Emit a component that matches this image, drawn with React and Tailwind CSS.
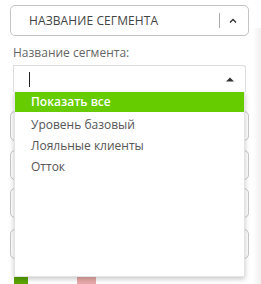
import React from "react";

const items = ["Уровень базовый", "Лояльные клиенты", "Отток"];

const App = () => {
  return (
    <div
      className="relative w-[261px] h-[284px] overflow-hidden bg-white"
      style={{ fontFamily: '"Open Sans", "Noto Sans", sans-serif' }}
    >
      {/* right panel edge */}
      <div className="absolute right-0 top-[28px] bottom-0 w-[8px] bg-gradient-to-r from-white to-[#f0f0f0]" />

      <div className="relative pl-[10px] pt-[5px] w-[249px]">
        <div className="flex items-center h-[31px] border border-[#c4c4c4] rounded-[5px] pl-[18px] pr-[8px]">
          <span className="flex-1 text-[12px] text-[#444] tracking-[0.1px]">НАЗВАНИЕ СЕГМЕНТА</span>
          <span className="w-px h-[15px] bg-[#aaa] mr-[8px]" />
          <svg width="10" height="10" viewBox="0 0 10 10" className="mr-[2px]">
            <path d="M2 6.5 L5 3.5 L8 6.5" fill="none" stroke="#333" strokeWidth="1.4" />
          </svg>
        </div>

        <div className="mt-[9px] pl-[3px] text-[12px] text-[#666] leading-[16px]">Название сегмента:</div>

        <div className="relative mt-[4px]">
          <div className="ml-[3px] w-[233px] h-[27px] border border-[#ddd] border-b-0 rounded-tr-[3px] flex items-center pl-[15px] pr-[11px]">
            <span className="w-px h-[15px] bg-[#222]" />
            <span className="flex-1" />
            <svg width="8" height="5" viewBox="0 0 8 5">
              <path d="M0 4.5 L4 0.5 L8 4.5 Z" fill="#333" />
            </svg>
          </div>

          <div className="flex flex-col">
            {[19, 9, 8, 11].map((m, i) => (
              <div key={i} style={{ marginTop: m }} className="h-[30px] border border-[#c8c8c8] rounded-[5px]" />
            ))}
          </div>

          <div className="flex gap-[49px] ml-[4px] mt-[17px]">
            <div className="w-[14px] h-[8px] bg-[#5aa500]" />
            <div className="w-[19px] h-[8px] bg-[#e8a9a9]" />
          </div>

          <div className="absolute left-[4px] top-[27px] w-[231px] h-[185px] bg-white shadow-[0_2px_5px_rgba(0,0,0,0.22)] border border-[#e4e4e4] border-t-0">
            <div className="h-[20px] bg-[#66cc00] flex items-center pl-[16px] text-[12px] font-semibold text-white">
              Показать все
            </div>
            <div className="pt-[2px]">
              {items.map((t) => (
                <div key={t} className="h-[21px] flex items-center pl-[16px] text-[12px] text-[#555]">
                  {t}
                </div>
              ))}
            </div>
          </div>
        </div>
      </div>
    </div>
  );
};

export default App;
